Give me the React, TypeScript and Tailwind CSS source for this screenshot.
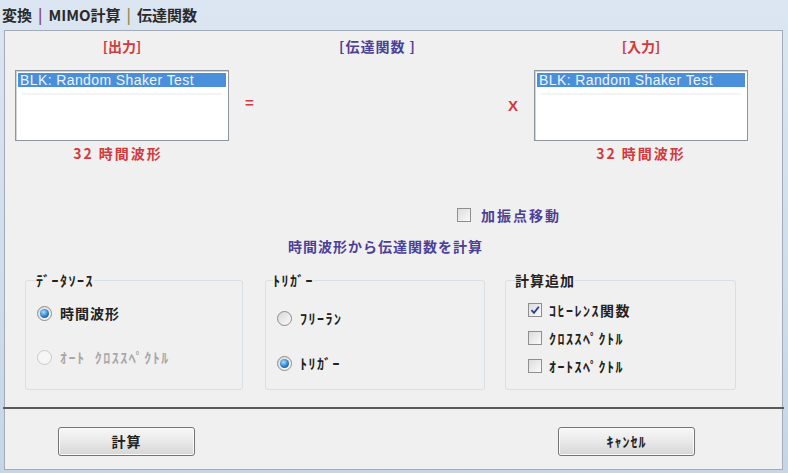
import React from "react";

const jp = "font-['Noto_Sans_CJK_JP','Liberation_Sans',sans-serif]";

function Radio({ checked, disabled }: { checked?: boolean; disabled?: boolean }) {
  return (
    <span
      className={
        "flex h-[15px] w-[15px] shrink-0 items-center justify-center rounded-full border " +
        (disabled
          ? "border-[#c9c9c9] bg-[#f6f6f6]"
          : "border-[#8c8c8c] bg-gradient-to-br from-[#d8d8d8] to-[#fbfbfb]")
      }
    >
      {checked && (
        <span className="h-[9px] w-[9px] rounded-full bg-[radial-gradient(circle_at_40%_35%,#a6e4ff,#2274c4_60%,#0d3d7c)]" />
      )}
    </span>
  );
}

function Check({ checked }: { checked?: boolean }) {
  return (
    <span className="flex h-[14px] w-[14px] shrink-0 items-center justify-center border border-[#8f8f8f] bg-gradient-to-br from-[#dcdcdc] to-[#fafafa]">
      {checked && (
        <svg width="10" height="10" viewBox="0 0 10 10">
          <path d="M1.5 5.2 L4 7.8 L8.8 1.8" fill="none" stroke="#253f8f" strokeWidth="1.8" />
        </svg>
      )}
    </span>
  );
}

function ListBox() {
  return (
    <div className="h-[71px] w-[214px] border border-[#8e959e] bg-white p-[2px] shadow-[inset_1px_1px_0_#d0d4da]">
      <div className="h-[14px] bg-[#4a8fd9] pl-[2px] font-['Liberation_Sans',sans-serif] text-[14px] leading-[14px] tracking-[0.4px] text-[#eef4ff]">
        BLK: Random Shaker Test
      </div>
      <div className="mx-[4px] mt-[6px] h-[2px] bg-[#f4f4f4]" />
    </div>
  );
}

function Button({ children }: { children: React.ReactNode }) {
  return (
    <button
      type="button"
      className="h-[29px] w-[137px] rounded-[3px] border border-[#747474] bg-gradient-to-b from-[#f7f7f7] via-[#e9e9e9] to-[#d6d6d6] text-[14px] font-bold tracking-[1px] text-[#222] shadow-[inset_0_0_0_1px_#fbfbfb]"
    >
      {children}
    </button>
  );
}

export default function App() {
  return (
    <div
      className={
        "flex h-[473px] w-[788px] flex-col overflow-hidden bg-gradient-to-b from-[#dbe6f2] to-[#c6d6e7] " +
        jp
      }
    >
      <div className="flex h-[30px] shrink-0 items-center pl-[2px] text-[15px] font-bold text-[#2a2a2a]">
        <span>変換</span>
        <span className="mx-[6px] text-[#8c4b86]">|</span>
        <span>MIMO計算</span>
        <span className="mx-[6px] text-[#9b8c52]">|</span>
        <span>伝達関数</span>
      </div>

      <div className="mb-[3px] ml-[4px] mr-[5px] flex flex-1 flex-col border border-[#a3acb6] bg-[#f0f0f0]">
        <div className="flex pt-[5px]">
          <div className="ml-[10px] flex w-[214px] flex-col items-center">
            <div className="h-[20px] text-[14px] font-bold leading-[20px] text-[#d4393d]">[出力]</div>
            <div className="mt-[14px]">
              <ListBox />
            </div>
            <div className="mt-[2px] h-[20px] pr-[8px] text-[14px] font-bold leading-[20px] tracking-[2px] text-[#d4393d]">
              32 時間波形
            </div>
          </div>

          <div className="flex w-[305px] flex-col">
            <div className="h-[20px] pr-[8px] text-center text-[14px] font-bold leading-[20px] tracking-[1px] text-[#4c3f98]">
              [伝達関数 ]
            </div>
            <div className="mt-[14px] flex h-[71px] items-center justify-between px-[16px] font-['Liberation_Sans',sans-serif] text-[15px] font-bold text-[#d4393d]">
              <span className="mb-[4px]">=</span>
              <span className="mt-[2px]">X</span>
            </div>
          </div>

          <div className="flex w-[214px] flex-col items-center">
            <div className="h-[20px] text-[14px] font-bold leading-[20px] text-[#d4393d]">[入力]</div>
            <div className="mt-[14px]">
              <ListBox />
            </div>
            <div className="mt-[2px] h-[20px] text-[14px] font-bold leading-[20px] tracking-[2px] text-[#d4393d]">
              32 時間波形
            </div>
          </div>
        </div>

        <div className="mt-[42px] flex h-[20px] items-center gap-[10px] pl-[452px]">
          <Check />
          <span className="text-[14px] font-bold tracking-[2px] text-[#4c3f98]">加振点移動</span>
        </div>

        <div className="mt-[11px] h-[20px] pl-[283px] text-[14px] font-bold leading-[20px] tracking-[1px] text-[#4c3f98]">
          時間波形から伝達関数を計算
        </div>

        <div className="mt-[14px] flex pl-[20px]">
          <fieldset className="h-[120px] w-[218px] rounded-[3px] border border-[#d8dfe6] px-[11px]">
            <legend className="ml-[-1px] text-[14px] font-bold leading-[20px] tracking-[1.5px] text-[#222]">ﾃﾞｰﾀｿｰｽ</legend>
            <div className="mt-[13px] flex h-[20px] items-center gap-[8px]">
              <Radio checked />
              <span className="text-[14px] font-bold tracking-[1px] text-[#222]">時間波形</span>
            </div>
            <div className="mt-[24px] flex h-[20px] items-center gap-[8px]">
              <Radio disabled />
              <span className="text-[14px] font-bold tracking-[1.5px] text-[#a8a8a8]">ｵｰﾄ&nbsp;&nbsp;ｸﾛｽｽﾍﾟｸﾄﾙ</span>
            </div>
          </fieldset>

          <fieldset className="ml-[22px] h-[120px] w-[220px] rounded-[3px] border border-[#d8dfe6] px-[11px]">
            <legend className="ml-[-4px] text-[14px] font-bold leading-[20px] tracking-[1.5px] text-[#222]">ﾄﾘｶﾞｰ</legend>
            <div className="mt-[18px] flex h-[20px] items-center gap-[8px]">
              <Radio />
              <span className="text-[14px] font-bold tracking-[1.5px] text-[#222]">ﾌﾘｰﾗﾝ</span>
            </div>
            <div className="mt-[25px] flex h-[20px] items-center gap-[8px]">
              <Radio checked />
              <span className="text-[14px] font-bold tracking-[1.5px] text-[#222]">ﾄﾘｶﾞｰ</span>
            </div>
          </fieldset>

          <fieldset className="ml-[20px] h-[120px] w-[231px] rounded-[3px] border border-[#d8dfe6] px-[22px]">
            <legend className="ml-[-13px] text-[14px] font-bold leading-[20px] tracking-[1px] text-[#222]">計算追加</legend>
            <div className="mt-[10px] flex flex-col gap-[8px]">
              <div className="flex h-[20px] items-center gap-[7px]">
                <Check checked />
                <span className="text-[14px] font-bold tracking-[1.5px] text-[#222]">ｺﾋｰﾚﾝｽ関数</span>
              </div>
              <div className="flex h-[20px] items-center gap-[7px]">
                <Check />
                <span className="text-[14px] font-bold tracking-[1.5px] text-[#222]">ｸﾛｽｽﾍﾟｸﾄﾙ</span>
              </div>
              <div className="flex h-[20px] items-center gap-[7px]">
                <Check />
                <span className="text-[14px] font-bold tracking-[1.5px] text-[#222]">ｵｰﾄｽﾍﾟｸﾄﾙ</span>
              </div>
            </div>
          </fieldset>
        </div>

        <div className="-mx-[2px] mt-[17px] h-[2px] bg-[#5a5a5a]" />

        <div className="mt-[18px] flex">
          <div className="ml-[53px]">
            <Button>計算</Button>
          </div>
          <div className="ml-[363px]">
            <Button>ｷｬﾝｾﾙ</Button>
          </div>
        </div>
      </div>
    </div>
  );
}
